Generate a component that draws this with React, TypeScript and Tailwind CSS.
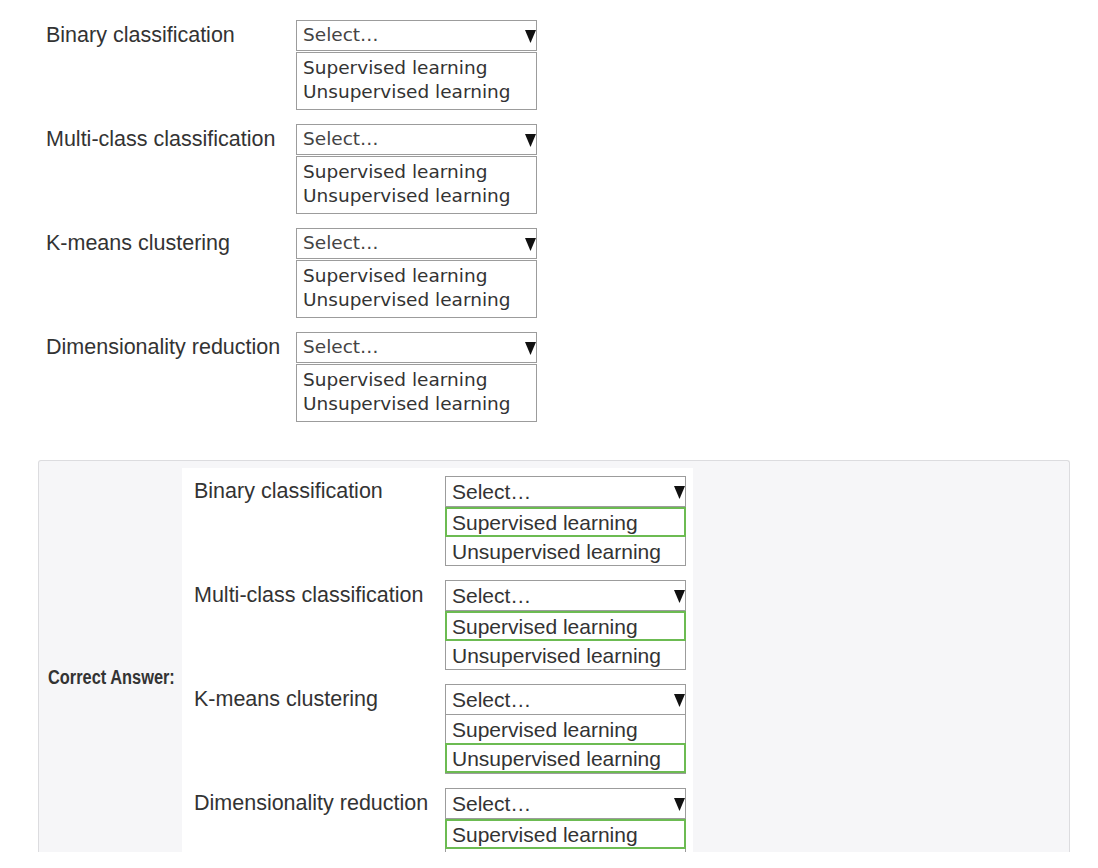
import React from "react";

const rows: { label: string; answer: number }[] = [
  { label: "Binary classification", answer: 0 },
  { label: "Multi-class classification", answer: 0 },
  { label: "K-means clustering", answer: 1 },
  { label: "Dimensionality reduction", answer: 0 },
];

const options = ["Supervised learning", "Unsupervised learning"];

function Tri() {
  return (
    <svg width="11" height="14" viewBox="0 0 11 14" className="shrink-0">
      <polygon points="0,1 11,1 5.5,14" fill="#111" />
    </svg>
  );
}

function UpperSelect() {
  return (
    <div className="w-[241px] font-['DejaVu_Sans',sans-serif] text-[18.5px] text-[#333]">
      <div className="h-[31px] border border-[#9c9c9c] bg-white flex items-center justify-between pl-[6px] pr-0">
        <span className="text-[#444] leading-none">Select…</span>
        <Tri />
      </div>
      <div className="mt-[1px] h-[58px] border border-[#9c9c9c] bg-white pl-[6px] pt-[3px] leading-[24px]">
        {options.map((o) => (
          <div key={o} className="whitespace-nowrap">
            {o}
          </div>
        ))}
      </div>
    </div>
  );
}

function LowerSelect({ answer }: { answer: number }) {
  return (
    <div className="w-[241px] font-['Liberation_Sans',Arial,sans-serif] text-[21px] text-[#333]">
      <div className="h-[31px] border border-[#9c9c9c] bg-white flex items-center justify-between pl-[6px] pr-0">
        <span className="leading-none">Select…</span>
        <Tri />
      </div>
      <div className="h-[59px] border border-t-0 border-[#9c9c9c] bg-white">
        {options.map((o, i) => (
          <div
            key={o}
            className={
              i === answer
                ? "relative -mx-px h-[30px] border-2 border-[#6cbb52] pl-[5px] flex items-center whitespace-nowrap leading-none"
                : "h-[28px] pl-[6px] flex items-center whitespace-nowrap leading-none"
            }
          >
            {o}
          </div>
        ))}
      </div>
    </div>
  );
}

export default function App() {
  return (
    <div className="w-[1098px] h-[868px] bg-white overflow-hidden">
      <div className="pt-[20px] pl-[46px] flex flex-col gap-[14px]">
        {rows.map((r) => (
          <div key={r.label} className="flex items-start">
            <div className="w-[250px] h-[31px] flex items-center font-['Liberation_Sans',Arial,sans-serif] text-[21.5px] text-[#333] whitespace-nowrap">
              {r.label}
            </div>
            <UpperSelect />
          </div>
        ))}
      </div>

      <div className="mt-[38px] ml-[38px] w-[1032px] h-[392px] overflow-hidden rounded-t-[3px] border border-b-0 border-[#dcdcdf] bg-[#f6f6f8]">
        <div className="flex pt-[7px] pb-[8px]">
          <div className="w-[143px] shrink-0 flex items-center pl-[9px]">
            <span className="origin-left scale-x-[0.84] font-['Liberation_Sans',Arial,sans-serif] font-bold text-[19.5px] text-[#333] whitespace-nowrap">
              Correct Answer:
            </span>
          </div>
          <div className="w-[511px] bg-white pt-[8px] pb-[10px] pl-[12px] flex flex-col gap-[14px]">
            {rows.map((r) => (
              <div key={r.label} className="flex items-start">
                <div className="w-[251px] h-[31px] flex items-center font-['Liberation_Sans',Arial,sans-serif] text-[21.5px] text-[#333] whitespace-nowrap">
                  {r.label}
                </div>
                <LowerSelect answer={r.answer} />
              </div>
            ))}
          </div>
        </div>
      </div>
    </div>
  );
}
